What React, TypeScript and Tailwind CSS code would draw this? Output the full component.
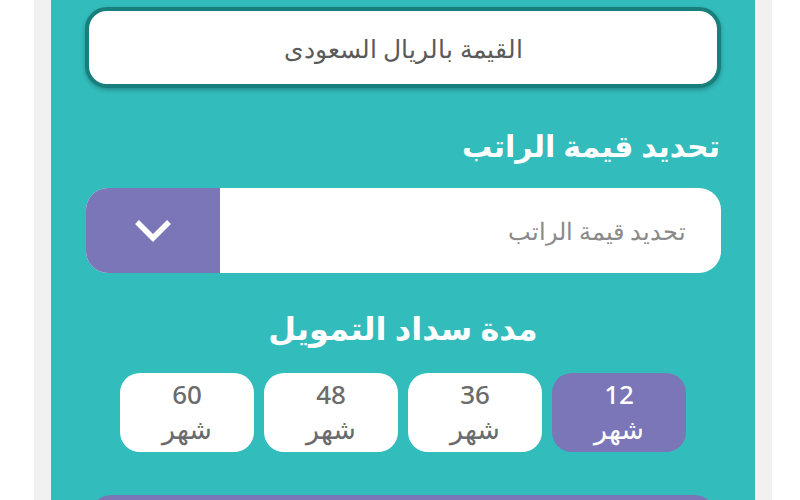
const terms = [
  { n: "12", active: true },
  { n: "36", active: false },
  { n: "48", active: false },
  { n: "60", active: false },
];

export default function App() {
  return (
    <div
      dir="rtl"
      className="w-[800px] h-[500px] overflow-hidden bg-white flex justify-start"
      style={{ fontFamily: '"Noto Sans", "DejaVu Sans", sans-serif' }}
    >
      <div className="w-[738px] h-full bg-[#f1f1f1] px-[17px] mr-[28px]">
        <div className="h-full bg-[#32bcbb] flex flex-col items-center pt-[7px]">
          {/* Amount input */}
          <div className="w-[636px] h-[81px] shrink-0 rounded-[22px] border-[4px] border-[#17807c] bg-white shadow-[0_2px_4px_rgba(0,0,0,0.25)] flex items-center justify-center">
            <span className="text-[25px] font-light text-[#5a5a5a] leading-[34px]">القيمة بالريال السعودى</span>
          </div>

          {/* Salary */}
          <div className="w-[634px] h-[40px] shrink-0 mt-[38px] text-[30px] font-bold text-white leading-[40px]">
            تحديد قيمة الراتب
          </div>
          <div className="w-[635px] h-[85px] shrink-0 mt-[22px] rounded-[22px] overflow-hidden flex bg-white">
            <div className="flex-1 flex items-center pr-[34px] text-[24px] font-light text-[#8a8a8a]">
              تحديد قيمة الراتب
            </div>
            <div className="w-[134px] bg-[#7a76b7] flex items-center justify-center">
              <svg width="38" height="24" viewBox="0 0 38 24" fill="none">
                <polyline points="3,3 19,19 35,3" stroke="white" strokeWidth="5.5" strokeLinejoin="miter" />
              </svg>
            </div>
          </div>

          {/* Term */}
          <div className="h-[40px] shrink-0 mt-[35px] text-[32px] font-bold text-white leading-[40px]">
            مدة سداد التمويل
          </div>
          <div className="flex gap-[10px] mt-[25px] shrink-0">
            {terms.map((t) => (
              <div
                key={t.n}
                className={
                  "w-[134px] h-[79px] rounded-[20px] flex flex-col items-center justify-center " +
                  (t.active ? "bg-[#7a76b7] text-white" : "bg-white text-[#6b6b6b]")
                }
              >
                <div className="h-[32px] leading-[32px] text-[26px] font-medium">{t.n}</div>
                <div className="h-[38px] leading-[38px] text-[27px]">شهر</div>
              </div>
            ))}
          </div>

          <div className="w-[624px] h-[40px] shrink-0 mt-[43px] rounded-t-[20px] bg-[#7a76b7]" />
        </div>
      </div>
    </div>
  );
}
